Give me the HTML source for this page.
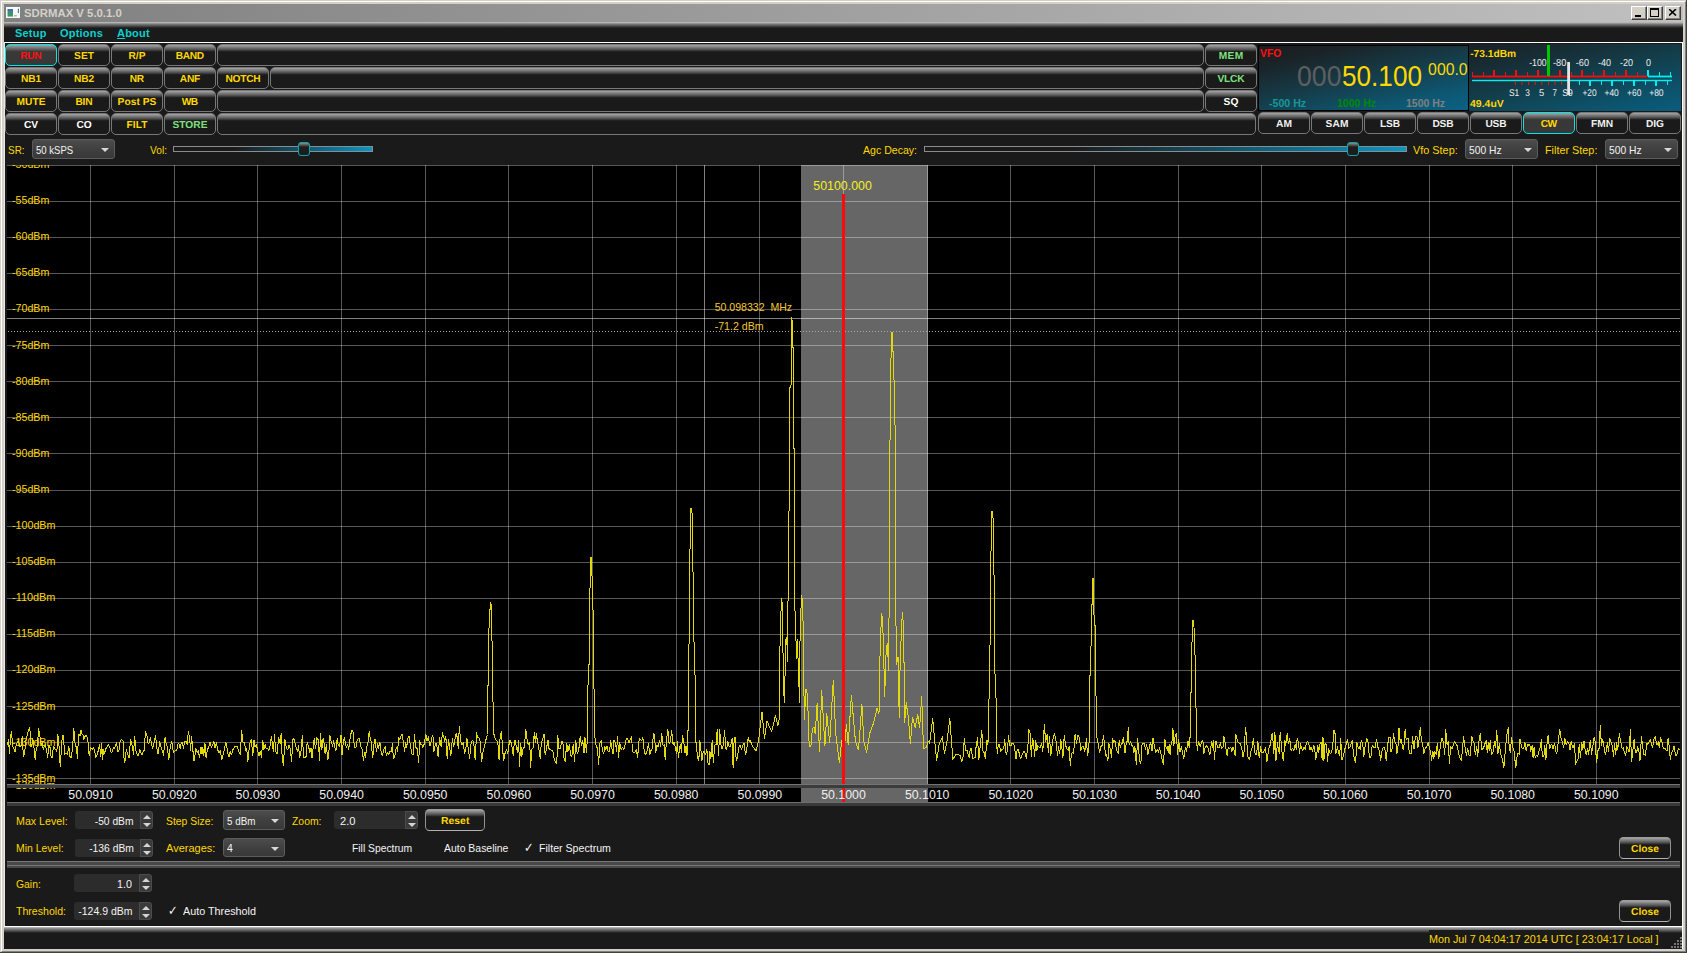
<!DOCTYPE html><html lang="en"><head><meta charset="utf-8"><title>SDRMAX V 5.0.1.0</title><style>
*{box-sizing:border-box;margin:0;padding:0}
html,body{width:1687px;height:953px;overflow:hidden;background:#1a1a1a}
body{font-family:"Liberation Sans",sans-serif;font-size:11px;position:relative;color:#fff}
.a{position:absolute}
.btn{position:absolute;height:22px;width:52px;border:1px solid #787878;border-radius:5px;
 background:linear-gradient(#a6a6a6 0px,#8a8a8a 1.5px,#5c5c5c 4px,#3a3a3a 5.5px,#1a1a1a 6.8px,#1a1a1a 100%);
 color:#ffd800;font-weight:bold;font-size:10.2px;text-rendering:geometricPrecision;text-align:center;line-height:24px;white-space:nowrap}
.btn.on{border-color:#00e6e6;background:linear-gradient(#a6a6a6 0px,#8c8c8c 1.5px,#646464 4px,#4a4a4a 5.5px,#383838 6.8px,#383838 100%)}
.btn.lt{border-color:#9c9c9c #929292 #b2b2b2;border-radius:4.5px}
.combo{position:absolute;height:20px;border:1px solid #5c5c5c;border-radius:3px;background:linear-gradient(#4c4c4c,#404040 50%,#383838)}
.combo i{position:absolute;right:5px;top:8px;width:0;height:0;border-left:4px solid transparent;border-right:4px solid transparent;border-top:4px solid #d8d8d8}
.spin{position:absolute;height:18px;background:#2c2c2c;border-radius:3px}
.spin b{position:absolute;right:0;top:0;width:13px;height:18px;background:#3a3a3a;border:1px solid #4c4c4c;border-radius:0 3px 3px 0}
.spin b:before{content:"";position:absolute;left:1.5px;top:3px;border-left:4px solid transparent;border-right:4px solid transparent;border-bottom:4px solid #d4d4d4}
.spin b:after{content:"";position:absolute;left:1.5px;top:10.5px;border-left:4px solid transparent;border-right:4px solid transparent;border-top:4px solid #d4d4d4}
.groove{position:absolute;height:6px;border:1px solid #8c8c8c;background:linear-gradient(90deg,#1a1a1a 0%,#1a1a1a 30%,#0a6a8a 75%,#0498c8 100%)}
.handle{position:absolute;width:12px;height:14px;border:1px solid #12a4ac;border-radius:3px;background:linear-gradient(#8c8c8c 0,#3a3a3a 3px,#1e1e1e 4px,#1c1c1c)}
</style></head><body>
<div class="a" style="left:0;top:0;width:1687px;height:953px;background:#d4d0c8"></div>
<div class="a" style="left:1px;top:1px;width:1685px;height:951px;border:1px solid #fff;border-right-color:#808080;border-bottom-color:#808080"></div>
<div class="a" style="left:0;top:0;width:1687px;height:953px;border-right:1px solid #404040;border-bottom:1px solid #404040"></div>
<div class="a" style="left:4px;top:4px;width:1679px;height:18px;background:linear-gradient(90deg,#808080,#c0c0c0)"></div>
<div class="a" style="top:6.69px;font-size:11px;line-height:13px;color:#d4d0c8;white-space:nowrap;font-weight:bold;left:24.20px;transform-origin:0 0;transform:scaleX(1.0321);">SDRMAX V 5.0.1.0</div>
<svg class="a" style="left:6px;top:7px" width="15" height="11" viewBox="0 0 15 11"><defs><linearGradient id="ig" x1="0" y1="0" x2="0" y2="1"><stop offset="0" stop-color="#3c66b4"/><stop offset="0.35" stop-color="#3c8a8a"/><stop offset="1" stop-color="#3ca04c"/></linearGradient></defs><rect x="0" y="0" width="14" height="11" fill="#fafafa"/><rect x="1.5" y="2" width="5.5" height="7.6" fill="url(#ig)"/><rect x="8" y="8" width="3" height="1.5" fill="#b8b8b8"/><rect x="11.8" y="1.8" width="1.2" height="4.2" fill="url(#ig)"/></svg>
<div class="a" style="left:1631px;top:6px;width:16px;height:14px;background:#d4d0c8;border:1px solid #fff;border-right-color:#404040;border-bottom-color:#404040;box-shadow:inset -1px -1px 0 #808080"></div><div class="a" style="left:1635px;top:15px;width:6px;height:2px;background:#000"></div>
<div class="a" style="left:1647px;top:6px;width:16px;height:14px;background:#d4d0c8;border:1px solid #fff;border-right-color:#404040;border-bottom-color:#404040;box-shadow:inset -1px -1px 0 #808080"></div><div class="a" style="left:1650px;top:8px;width:9px;height:9px;border:1px solid #000;border-top-width:2px"></div>
<div class="a" style="left:1665px;top:6px;width:16px;height:14px;background:#d4d0c8;border:1px solid #fff;border-right-color:#404040;border-bottom-color:#404040;box-shadow:inset -1px -1px 0 #808080"></div><svg class="a" style="left:1669px;top:9px" width="8" height="7" viewBox="0 0 8 7"><path d="M0 0L7 6.5M7 0L0 6.5" stroke="#000" stroke-width="1.6"/></svg>
<div class="a" style="left:4px;top:22px;width:1679px;height:927px;background:#1a1a1a"></div>
<div class="a" style="left:4px;top:22px;width:1679px;height:6px;background:linear-gradient(#c8c8c8,#7c7c7c 35%,#1a1a1a)"></div>
<div class="a" style="left:15px;top:26px;font-size:11px;font-weight:bold;color:#0cd0d0;line-height:14px;letter-spacing:0.2px">Setup</div>
<div class="a" style="left:60px;top:26px;font-size:11px;font-weight:bold;color:#0cd0d0;line-height:14px;letter-spacing:0.2px">Options</div>
<div class="a" style="left:117px;top:26px;font-size:11px;font-weight:bold;color:#0cd0d0;line-height:14px;letter-spacing:0.2px"><u>A</u>bout</div>
<div class="a" style="left:4px;top:42px;width:1679px;height:1px;background:#fff"></div>
<div class="a" style="left:4px;top:42px;width:1px;height:885px;background:#e8e8e8"></div>
<div class="a" style="left:1682px;top:42px;width:1px;height:907px;background:#fff"></div>
<div class="btn on" style="left:5px;top:44px;width:52px;color:#ff1010;letter-spacing:-0.37px;text-indent:-0.37px;">RUN</div>
<div class="btn " style="left:58px;top:44px;width:52px;letter-spacing:0.05px;text-indent:0.05px;">SET</div>
<div class="btn " style="left:111px;top:44px;width:52px;letter-spacing:-0.00px;text-indent:-0.00px;">R/P</div>
<div class="btn " style="left:164px;top:44px;width:52px;letter-spacing:-0.37px;text-indent:-0.37px;">BAND</div>
<div class="btn " style="left:5px;top:67px;width:52px;letter-spacing:-0.14px;text-indent:-0.14px;">NB1</div>
<div class="btn " style="left:58px;top:67px;width:52px;letter-spacing:-0.14px;text-indent:-0.14px;">NB2</div>
<div class="btn " style="left:111px;top:67px;width:52px;letter-spacing:-0.37px;text-indent:-0.37px;">NR</div>
<div class="btn " style="left:164px;top:67px;width:52px;letter-spacing:-0.32px;text-indent:-0.32px;">ANF</div>
<div class="btn " style="left:5px;top:90px;width:52px;letter-spacing:0.03px;text-indent:0.03px;">MUTE</div>
<div class="btn " style="left:58px;top:90px;width:52px;letter-spacing:-0.19px;text-indent:-0.19px;">BIN</div>
<div class="btn " style="left:111px;top:90px;width:52px;letter-spacing:0.06px;text-indent:0.06px;">Post PS</div>
<div class="btn " style="left:164px;top:90px;width:52px;letter-spacing:-0.50px;text-indent:-0.50px;">WB</div>
<div class="btn " style="left:5px;top:113px;width:52px;color:#ffffff;letter-spacing:-0.09px;text-indent:-0.09px;">CV</div>
<div class="btn " style="left:58px;top:113px;width:52px;color:#ffffff;letter-spacing:-0.15px;text-indent:-0.15px;">CO</div>
<div class="btn " style="left:111px;top:113px;width:52px;letter-spacing:0.06px;text-indent:0.06px;">FILT</div>
<div class="btn " style="left:164px;top:113px;width:52px;color:#7ee07e;letter-spacing:0.01px;text-indent:0.01px;">STORE</div>
<div class="btn " style="left:217px;top:67px;width:52px;letter-spacing:-0.25px;text-indent:-0.25px;">NOTCH</div>
<div class="btn " style="left:217px;top:44px;width:987px;"></div>
<div class="btn " style="left:270px;top:67px;width:934px;"></div>
<div class="btn " style="left:217px;top:90px;width:987px;"></div>
<div class="btn " style="left:217px;top:113px;width:1039px;"></div>
<div class="btn " style="left:1205px;top:44px;width:52px;color:#7ee07e;letter-spacing:0.40px;text-indent:0.40px;">MEM</div>
<div class="btn " style="left:1205px;top:67px;width:52px;color:#7ee07e;letter-spacing:-0.19px;text-indent:-0.19px;">VLCK</div>
<div class="btn " style="left:1205px;top:90px;width:52px;color:#fff;letter-spacing:0.13px;text-indent:0.13px;">SQ</div>
<div class="btn " style="left:1258px;top:112px;width:52px;color:#f0f0f0;letter-spacing:0.07px;text-indent:0.07px;">AM</div>
<div class="btn " style="left:1311px;top:112px;width:52px;color:#f0f0f0;letter-spacing:0.11px;text-indent:0.11px;">SAM</div>
<div class="btn " style="left:1364px;top:112px;width:52px;color:#f0f0f0;letter-spacing:-0.13px;text-indent:-0.13px;">LSB</div>
<div class="btn " style="left:1417px;top:112px;width:52px;color:#f0f0f0;letter-spacing:-0.18px;text-indent:-0.18px;">DSB</div>
<div class="btn " style="left:1470px;top:112px;width:52px;color:#f0f0f0;letter-spacing:-0.18px;text-indent:-0.18px;">USB</div>
<div class="btn on" style="left:1523px;top:112px;width:52px;letter-spacing:-0.50px;text-indent:-0.50px;">CW</div>
<div class="btn " style="left:1576px;top:112px;width:52px;color:#f0f0f0;letter-spacing:-0.03px;text-indent:-0.03px;">FMN</div>
<div class="btn " style="left:1629px;top:112px;width:52px;color:#f0f0f0;letter-spacing:-0.04px;text-indent:-0.04px;">DIG</div>
<div class="a" style="left:1258px;top:45px;width:211px;height:66px;border:1px solid #000;background:linear-gradient(167deg,#1b1c1e 0%,#1a2327 18%,#153e4c 52%,#0d5874 82%,#0b6184 100%)"></div>
<div class="a" style="top:46.69px;font-size:11px;line-height:13px;color:#ff1010;white-space:nowrap;font-weight:bold;left:1260.00px;transform-origin:0 0;transform:scaleX(0.9375);">VFO</div>
<div class="a" style="top:59.45px;font-size:29px;line-height:35px;color:#5e5e5e;white-space:nowrap;left:1297.00px;transform-origin:0 0;transform:scaleX(0.9197);">000</div>
<div class="a" style="top:59.45px;font-size:29px;line-height:35px;color:#ffd800;white-space:nowrap;left:1342.40px;transform-origin:0 0;transform:scaleX(0.9019);">50.100</div>
<div class="a" style="top:59.83px;font-size:15.8px;line-height:19px;color:#ffd800;white-space:nowrap;left:1428.10px;transform-origin:0 0;">000.0</div>
<div class="a" style="top:97.09px;font-size:10.7px;line-height:13px;color:#1a9898;white-space:nowrap;font-weight:bold;left:1269.30px;transform-origin:0 0;transform:scaleX(0.9929);">-500 Hz</div>
<div class="a" style="top:97.09px;font-size:10.7px;line-height:13px;color:#008a00;white-space:nowrap;font-weight:bold;left:1336.50px;transform-origin:0 0;transform:scaleX(0.9811);">1000 Hz</div>
<div class="a" style="top:97.09px;font-size:10.7px;line-height:13px;color:#808080;white-space:nowrap;font-weight:bold;left:1405.60px;transform-origin:0 0;transform:scaleX(0.9811);">1500 Hz</div>
<div class="a" style="left:1469px;top:44px;width:212px;height:67px;background:linear-gradient(167deg,#1a2024 0%,#182c34 22%,#12404e 52%,#0c546e 82%,#0a5c7c 100%)"></div>
<svg class="a" style="left:1469px;top:44px" width="212" height="67" viewBox="1469 44 212 67" font-family="Liberation Sans, sans-serif"><rect x="1472" y="75.6" width="176" height="1.8" fill="#ff0a0a"/><rect x="1648" y="75.6" width="24" height="1.8" fill="#00f0f0"/><rect x="1472" y="72" width="1" height="4" fill="#ff0a0a"/><rect x="1483" y="72" width="1" height="4" fill="#ff0a0a"/><rect x="1493" y="70" width="2" height="6" fill="#ff0a0a"/><rect x="1505" y="72" width="1" height="4" fill="#ff0a0a"/><rect x="1515" y="70" width="2" height="6" fill="#ff0a0a"/><rect x="1527" y="72" width="1" height="4" fill="#ff0a0a"/><rect x="1537" y="70" width="2" height="6" fill="#ff0a0a"/><rect x="1549" y="72" width="1" height="4" fill="#ff0a0a"/><rect x="1559" y="70" width="2" height="6" fill="#ff0a0a"/><rect x="1571" y="72" width="1" height="4" fill="#ff0a0a"/><rect x="1581" y="70" width="2" height="6" fill="#ff0a0a"/><rect x="1593" y="72" width="1" height="4" fill="#ff0a0a"/><rect x="1603" y="70" width="2" height="6" fill="#ff0a0a"/><rect x="1615" y="72" width="1" height="4" fill="#ff0a0a"/><rect x="1625" y="70" width="2" height="6" fill="#ff0a0a"/><rect x="1637" y="72" width="1" height="4" fill="#ff0a0a"/><rect x="1647" y="70" width="2" height="6" fill="#00f0f0"/><rect x="1659" y="72" width="1" height="4" fill="#00f0f0"/><rect x="1670" y="72" width="1" height="4" fill="#00f0f0"/><rect x="1472" y="79.8" width="200" height="1.4" fill="#00f0f0"/><rect x="1514.8" y="81" width="1" height="4" fill="#ff0a0a"/><rect x="1521.4" y="81" width="1" height="4" fill="#ff0a0a"/><rect x="1528.1" y="81" width="1" height="4" fill="#ff0a0a"/><rect x="1534.7" y="81" width="1" height="4" fill="#ff0a0a"/><rect x="1541.3" y="81" width="1" height="4" fill="#ff0a0a"/><rect x="1548.0" y="81" width="1" height="4" fill="#ff0a0a"/><rect x="1554.6" y="81" width="1" height="4" fill="#ff0a0a"/><rect x="1561.2" y="81" width="1" height="4" fill="#ff0a0a"/><rect x="1579" y="81" width="1" height="4" fill="#00f0f0"/><rect x="1601" y="81" width="1" height="4" fill="#00f0f0"/><rect x="1623" y="81" width="1" height="4" fill="#00f0f0"/><rect x="1645" y="81" width="1" height="4" fill="#00f0f0"/><rect x="1667" y="81" width="1" height="4" fill="#00f0f0"/><rect x="1589" y="81" width="2" height="5" fill="#00f0f0"/><rect x="1611" y="81" width="2" height="5" fill="#00f0f0"/><rect x="1633" y="81" width="2" height="5" fill="#00f0f0"/><rect x="1655" y="81" width="2" height="5" fill="#00f0f0"/><text x="1529.2" y="66" font-size="10.1" fill="#ececec" text-rendering="geometricPrecision" textLength="17.4" lengthAdjust="spacingAndGlyphs">-100</text><text x="1552.9" y="66" font-size="10.1" fill="#ececec" text-rendering="geometricPrecision" textLength="13.4" lengthAdjust="spacingAndGlyphs">-80</text><text x="1575.8" y="66" font-size="10.1" fill="#ececec" text-rendering="geometricPrecision" textLength="13.2" lengthAdjust="spacingAndGlyphs">-60</text><text x="1598.0" y="66" font-size="10.1" fill="#ececec" text-rendering="geometricPrecision" textLength="13" lengthAdjust="spacingAndGlyphs">-40</text><text x="1620.0" y="66" font-size="10.1" fill="#ececec" text-rendering="geometricPrecision" textLength="13" lengthAdjust="spacingAndGlyphs">-20</text><text x="1645.9" y="66" font-size="10.1" fill="#ececec" text-rendering="geometricPrecision" textLength="5" lengthAdjust="spacingAndGlyphs">0</text><text x="1509.0" y="96" font-size="9.7" fill="#ececec" text-rendering="geometricPrecision" textLength="10.3" lengthAdjust="spacingAndGlyphs">S1</text><text x="1525.2" y="96" font-size="9.7" fill="#ececec" text-rendering="geometricPrecision" textLength="4.6" lengthAdjust="spacingAndGlyphs">3</text><text x="1539.0" y="96" font-size="9.7" fill="#ececec" text-rendering="geometricPrecision" textLength="5.2" lengthAdjust="spacingAndGlyphs">5</text><text x="1552.4" y="96" font-size="9.7" fill="#ececec" text-rendering="geometricPrecision" textLength="4.4" lengthAdjust="spacingAndGlyphs">7</text><text x="1562.3" y="96" font-size="9.7" fill="#ececec" text-rendering="geometricPrecision" textLength="10.5" lengthAdjust="spacingAndGlyphs">S9</text><text x="1582.5" y="96" font-size="9.7" fill="#ececec" text-rendering="geometricPrecision" textLength="14.1" lengthAdjust="spacingAndGlyphs">+20</text><text x="1604.5" y="96" font-size="9.7" fill="#ececec" text-rendering="geometricPrecision" textLength="14.2" lengthAdjust="spacingAndGlyphs">+40</text><text x="1627.1" y="96" font-size="9.7" fill="#ececec" text-rendering="geometricPrecision" textLength="14.2" lengthAdjust="spacingAndGlyphs">+60</text><text x="1649.2" y="96" font-size="9.7" fill="#ececec" text-rendering="geometricPrecision" textLength="14.4" lengthAdjust="spacingAndGlyphs">+80</text><rect x="1547" y="45" width="3" height="31" fill="#00c800"/><rect x="1567.2" y="62" width="2.8" height="33" fill="#e4e4e4"/></svg>
<div class="a" style="top:49.47px;font-size:10.2px;line-height:12px;color:#ffd800;white-space:nowrap;font-weight:bold;text-rendering:geometricPrecision;left:1470.20px;transform-origin:0 0;">-73.1dBm</div>
<div class="a" style="top:99.47px;font-size:10.2px;line-height:12px;color:#ffd800;white-space:nowrap;font-weight:bold;text-rendering:geometricPrecision;left:1470.20px;transform-origin:0 0;transform:scaleX(1.0278);">49.4uV</div>
<div class="a" style="top:142.62px;font-size:11.5px;line-height:14px;color:#ffd800;white-space:nowrap;left:7.70px;transform-origin:0 0;transform:scaleX(0.8659);">SR:</div>
<div class="combo" style="left:32px;top:139px;width:83px"><i></i></div>
<div class="a" style="top:142.62px;font-size:11.5px;line-height:14px;color:#f4f4f4;white-space:nowrap;left:36.20px;transform-origin:0 0;transform:scaleX(0.8291);">50 kSPS</div>
<div class="a" style="top:142.62px;font-size:11.5px;line-height:14px;color:#ffd800;white-space:nowrap;left:149.60px;transform-origin:0 0;transform:scaleX(0.8862);">Vol:</div>
<div class="groove" style="left:173px;top:146px;width:200px"></div>
<div class="handle" style="left:298px;top:142px"></div>
<div class="a" style="top:142.62px;font-size:11.5px;line-height:14px;color:#ffd800;white-space:nowrap;left:863.00px;transform-origin:0 0;transform:scaleX(0.9183);">Agc Decay:</div>
<div class="groove" style="left:924px;top:146px;width:483px"></div>
<div class="handle" style="left:1347px;top:142px"></div>
<div class="a" style="top:142.62px;font-size:11.5px;line-height:14px;color:#ffd800;white-space:nowrap;left:1412.80px;transform-origin:0 0;transform:scaleX(0.9449);">Vfo Step:</div>
<div class="combo" style="left:1465px;top:139px;width:73px"><i></i></div>
<div class="a" style="top:142.62px;font-size:11.5px;line-height:14px;color:#f4f4f4;white-space:nowrap;left:1468.90px;transform-origin:0 0;transform:scaleX(0.8974);">500 Hz</div>
<div class="a" style="top:142.62px;font-size:11.5px;line-height:14px;color:#ffd800;white-space:nowrap;left:1544.60px;transform-origin:0 0;transform:scaleX(0.9424);">Filter Step:</div>
<div class="combo" style="left:1605px;top:139px;width:73px"><i></i></div>
<div class="a" style="top:142.62px;font-size:11.5px;line-height:14px;color:#f4f4f4;white-space:nowrap;left:1608.90px;transform-origin:0 0;transform:scaleX(0.8974);">500 Hz</div>
<svg class="a" style="left:0;top:165px" width="1687" height="641" viewBox="0 165 1687 641" font-family="Liberation Sans, sans-serif"><defs><clipPath id="pc"><rect x="7" y="165" width="1673" height="624.3"/></clipPath><clipPath id="pb"><rect x="801" y="165" width="127" height="620"/></clipPath></defs><rect x="7" y="165" width="1673" height="637" fill="#000"/><rect x="801" y="165" width="127" height="637" fill="#666"/><path d="M90.5 165V784 M174.5 165V784 M257.5 165V784 M341.5 165V784 M425.5 165V784 M508.5 165V784 M592.5 165V784 M676.5 165V784 M759.5 165V784 M843.5 165V784 M927.5 165V784 M1010.5 165V784 M1094.5 165V784 M1178.5 165V784 M1261.5 165V784 M1345.5 165V784 M1429.5 165V784 M1512.5 165V784 M1596.5 165V784 M7 165.5H1680 M7 201.5H1680 M7 237.5H1680 M7 273.5H1680 M7 309.5H1680 M7 345.5H1680 M7 381.5H1680 M7 417.5H1680 M7 453.5H1680 M7 490.5H1680 M7 526.5H1680 M7 562.5H1680 M7 598.5H1680 M7 634.5H1680 M7 670.5H1680 M7 706.5H1680 M7 742.5H1680 M7 778.5H1680" stroke="#fff" stroke-opacity="0.34" stroke-width="1" fill="none"/><path d="M704.5 165V784M7 318.5H1680" stroke="#fff" stroke-opacity="0.5" stroke-width="1" fill="none"/><path d="M8 331.5H1680" stroke="#a8a8a8" stroke-width="1" stroke-dasharray="1 2" fill="none"/><g clip-path="url(#pc)" font-size="11" fill="#ffd800"><text x="12" y="168" textLength="37.3" lengthAdjust="spacingAndGlyphs">-50dBm</text><text x="12" y="204" textLength="37.3" lengthAdjust="spacingAndGlyphs">-55dBm</text><text x="12" y="240" textLength="37.3" lengthAdjust="spacingAndGlyphs">-60dBm</text><text x="12" y="276" textLength="37.3" lengthAdjust="spacingAndGlyphs">-65dBm</text><text x="12" y="312" textLength="37.3" lengthAdjust="spacingAndGlyphs">-70dBm</text><text x="12" y="349" textLength="37.3" lengthAdjust="spacingAndGlyphs">-75dBm</text><text x="12" y="385" textLength="37.3" lengthAdjust="spacingAndGlyphs">-80dBm</text><text x="12" y="421" textLength="37.3" lengthAdjust="spacingAndGlyphs">-85dBm</text><text x="12" y="457" textLength="37.3" lengthAdjust="spacingAndGlyphs">-90dBm</text><text x="12" y="493" textLength="37.3" lengthAdjust="spacingAndGlyphs">-95dBm</text><text x="12" y="529" textLength="43.4" lengthAdjust="spacingAndGlyphs">-100dBm</text><text x="12" y="565" textLength="43.4" lengthAdjust="spacingAndGlyphs">-105dBm</text><text x="12" y="601" textLength="43.4" lengthAdjust="spacingAndGlyphs">-110dBm</text><text x="12" y="637" textLength="43.4" lengthAdjust="spacingAndGlyphs">-115dBm</text><text x="12" y="673" textLength="43.4" lengthAdjust="spacingAndGlyphs">-120dBm</text><text x="12" y="710" textLength="43.4" lengthAdjust="spacingAndGlyphs">-125dBm</text><text x="12" y="746" textLength="43.4" lengthAdjust="spacingAndGlyphs">-130dBm</text><text x="12" y="782" textLength="43.4" lengthAdjust="spacingAndGlyphs">-135dBm</text><text x="12" y="789" textLength="43.4" lengthAdjust="spacingAndGlyphs">-136dBm</text></g><polyline points="7.5,744.9 8.4,739.4 9.6,753.4 10.5,735.8 11.5,731.8 12.7,746.3 13.7,748.7 15.1,751.6 16.2,745.1 17.2,742.7 18.5,739.9 19.8,746.6 21.3,745.8 22.2,736.1 23.4,756.3 24.7,752.7 25.9,740.1 27.4,734.8 28.8,729.3 29.8,727.0 30.8,746.4 31.7,746.9 32.7,738.0 34.1,749.1 35.2,760.0 36.2,748.9 37.4,746.6 38.5,728.9 39.7,734.5 41.2,745.6 42.3,742.2 43.2,749.5 44.3,746.2 45.2,744.7 46.5,749.4 47.6,757.8 48.8,745.4 49.9,746.3 50.8,755.9 52.0,757.7 53.4,746.5 54.4,747.4 55.5,749.7 56.9,751.3 57.9,734.8 59.0,745.5 60.2,766.5 61.3,750.8 62.3,735.1 63.4,735.9 64.7,754.4 65.9,753.1 67.3,754.4 68.9,746.2 69.8,756.5 71.2,757.8 72.5,748.3 73.8,728.8 75.2,745.2 76.3,746.8 77.4,758.3 78.6,734.2 80.1,735.4 81.0,729.9 81.9,734.0 83.0,735.3 83.9,739.5 85.3,735.8 86.8,735.5 88.0,741.5 89.2,755.9 90.7,747.6 92.2,749.5 93.1,747.6 94.5,750.3 95.8,757.7 96.8,756.0 98.3,750.4 99.5,745.0 100.9,756.2 101.7,743.9 102.6,759.9 103.6,749.1 104.6,753.3 106.0,748.5 107.3,746.5 108.6,744.7 109.9,747.6 110.8,751.9 112.0,752.4 113.3,747.8 114.1,749.1 115.5,745.7 116.6,742.7 117.8,751.8 118.8,751.1 120.2,741.1 121.7,739.5 123.0,741.2 124.0,758.4 124.9,762.4 126.3,749.7 127.4,753.5 129.0,758.3 130.5,739.8 131.7,743.1 132.5,747.2 133.4,754.2 134.7,736.4 136.0,750.8 137.6,755.3 138.4,755.7 139.8,749.2 141.0,752.7 142.3,755.0 143.3,750.7 144.2,750.6 145.5,731.2 146.9,735.2 147.8,742.8 148.8,743.6 150.3,737.4 151.6,744.4 152.6,748.5 153.6,744.7 154.7,739.2 155.7,735.8 156.6,747.4 158.1,753.8 159.7,741.2 161.2,748.1 162.4,750.4 163.6,755.2 165.1,737.2 166.3,744.9 167.3,746.3 168.8,759.6 170.2,747.7 171.8,741.2 172.8,749.5 173.9,752.4 175.1,750.8 176.6,751.0 178.1,743.2 179.2,744.0 180.1,748.8 181.2,743.4 182.2,742.1 183.4,748.1 184.9,741.5 186.4,741.9 187.3,744.3 188.3,731.8 189.5,736.7 190.6,750.8 191.5,736.8 192.5,744.9 193.7,760.2 194.5,760.3 195.7,748.7 197.2,752.8 198.2,750.5 199.6,757.6 201.0,746.7 202.0,754.1 202.9,747.8 203.8,755.3 205.0,743.4 206.1,758.0 207.3,749.7 208.7,747.3 210.0,742.5 211.5,747.1 212.6,744.9 214.0,741.6 215.1,748.0 216.4,742.9 217.4,748.7 218.9,753.0 220.5,750.4 221.6,760.0 223.1,754.9 224.6,747.9 225.8,742.5 226.6,745.5 227.5,751.9 229.0,757.1 230.1,751.3 231.6,754.8 232.9,749.7 234.4,747.4 235.5,746.1 236.6,746.2 237.4,746.8 238.9,752.0 240.4,754.2 241.6,730.5 243.0,742.0 244.3,742.4 245.7,750.1 246.7,748.7 247.8,761.9 248.8,751.6 250.2,742.2 251.4,739.4 252.8,756.0 254.0,740.1 255.0,746.5 256.3,744.2 257.5,749.6 259.0,755.6 260.5,751.1 261.4,757.2 262.9,740.5 263.9,749.7 265.2,743.9 266.2,748.8 267.5,748.1 268.8,750.5 270.2,745.4 271.3,736.8 272.3,742.4 273.4,752.0 274.5,734.9 275.6,749.9 276.4,753.9 277.5,753.8 278.4,737.4 279.3,739.6 280.3,743.9 281.2,732.9 282.2,758.1 283.4,765.5 284.9,739.5 286.3,747.7 287.7,749.9 288.9,745.2 290.3,748.8 291.6,761.5 292.9,739.3 294.0,738.8 295.2,744.1 296.4,748.4 297.6,751.8 298.5,745.5 299.7,757.8 301.1,750.1 302.3,735.2 303.7,757.8 304.7,757.6 306.2,756.3 307.1,742.4 308.6,746.2 309.8,752.7 311.0,748.2 312.0,758.2 312.9,749.8 314.2,738.9 315.5,748.9 316.8,737.8 318.3,739.9 319.5,760.7 320.5,733.7 321.8,749.4 323.1,738.6 324.0,743.0 325.1,753.4 326.4,744.0 327.6,759.4 328.5,758.9 329.9,735.7 331.2,742.0 332.7,746.4 333.6,740.0 334.4,746.5 336.0,750.5 337.2,738.5 338.2,744.8 339.6,746.2 341.0,734.8 342.0,755.2 343.4,741.5 344.4,737.6 345.6,744.5 346.6,747.2 347.7,744.7 348.7,749.9 350.2,737.6 351.7,730.1 353.2,732.4 354.3,747.1 355.8,747.8 357.3,739.5 358.6,738.2 359.5,738.8 360.9,747.0 362.4,749.4 363.3,760.9 364.6,752.6 365.5,757.5 366.6,746.7 367.7,744.4 369.2,731.2 370.1,737.3 371.2,741.7 372.6,757.4 373.5,752.7 374.3,739.4 375.3,739.1 376.3,751.4 377.7,743.9 378.6,748.2 379.9,742.2 381.3,753.3 382.4,755.7 383.8,749.4 385.2,746.8 386.3,755.3 387.7,752.7 388.9,754.5 389.9,751.4 391.4,751.1 392.4,743.9 393.4,758.8 395.0,755.3 396.4,747.2 397.7,751.1 398.5,737.6 399.7,739.9 401.0,736.2 402.2,734.1 403.2,741.1 404.5,751.2 405.7,742.9 406.8,747.2 407.8,738.7 409.0,735.9 410.3,744.4 411.8,754.0 413.2,754.7 414.5,734.9 415.8,747.4 417.3,748.9 418.7,762.8 419.6,740.7 420.7,744.7 421.7,744.2 422.7,747.2 423.6,746.9 424.8,739.9 425.9,734.5 427.1,741.0 428.5,736.6 429.6,745.2 430.5,745.0 431.6,738.4 432.9,735.0 433.8,751.9 434.7,746.5 436.2,743.1 437.2,747.4 438.1,756.9 439.6,737.0 441.1,746.6 442.4,732.9 443.9,737.5 444.8,741.4 445.8,736.0 447.2,758.4 448.5,739.5 449.6,747.0 450.9,755.7 452.4,738.2 453.6,747.0 454.9,739.8 456.1,733.5 457.2,737.1 458.3,748.9 459.3,726.8 460.7,741.0 462.0,744.4 463.5,742.6 464.3,753.1 465.6,751.0 466.9,738.3 468.2,748.0 469.6,758.6 471.1,742.9 472.5,740.3 473.7,742.5 475.2,760.0 476.6,732.7 477.4,737.2 479.0,737.8 480.3,741.7 481.6,762.0 483.1,750.9 484.1,747.3 485.5,742.8 486.4,737.0 487.5,734.5 487.8,686.0 488.8,683.9 489.0,627.7 489.8,625.5 490.1,602.5 490.9,602.5 491.4,609.7 491.9,640.7 492.7,642.8 493.0,701.9 493.8,703.3 494.0,734.5 494.9,737.4 496.3,740.7 497.8,741.7 499.1,759.8 500.2,735.1 501.5,731.8 502.6,750.0 503.8,760.3 505.2,752.5 506.7,749.5 507.8,754.0 508.8,745.4 510.0,740.4 511.1,742.8 512.0,747.3 513.2,755.7 514.4,741.0 515.4,740.7 516.5,748.0 517.6,752.1 518.6,740.0 519.5,766.7 520.7,743.1 521.8,756.8 523.3,747.1 524.3,748.0 525.8,729.1 526.7,737.2 528.2,745.0 529.7,742.3 530.7,767.8 531.5,749.5 533.0,748.0 534.4,732.2 535.3,742.6 536.4,733.1 537.5,742.8 538.4,745.2 539.3,752.6 540.3,758.3 541.2,744.0 542.7,739.1 544.1,734.0 545.1,755.1 546.1,751.0 547.0,745.6 548.0,740.0 548.9,748.2 550.2,749.5 551.3,750.1 552.8,750.7 554.3,759.3 555.8,762.7 556.8,763.7 557.7,735.1 559.0,748.9 560.3,749.0 561.6,741.8 562.9,742.0 563.9,757.3 565.2,761.5 566.7,743.1 567.9,751.5 569.3,744.3 570.6,755.2 571.8,757.0 573.2,744.2 574.6,761.5 575.8,740.6 576.7,751.6 577.6,753.4 578.9,748.7 580.2,736.4 581.6,745.3 582.8,740.9 584.0,753.3 584.9,736.9 586.4,752.1 587.8,734.5 588.1,667.1 589.1,664.3 589.4,590.6 590.2,587.7 590.5,557.5 591.4,557.5 591.9,567.0 592.4,607.6 593.2,610.4 593.5,687.9 594.4,689.8 594.7,734.5 595.7,744.6 597.3,748.1 598.7,764.1 599.7,744.0 601.2,740.5 602.4,750.1 603.7,753.7 604.9,746.6 605.8,749.4 607.0,746.1 608.2,751.6 609.5,751.5 610.7,740.9 611.8,748.0 613.0,754.2 614.0,739.8 615.6,743.0 616.5,751.9 617.6,736.8 618.6,757.2 619.7,742.4 621.1,749.9 622.5,747.1 623.8,749.5 624.7,746.9 626.2,738.6 627.7,738.5 628.9,742.9 630.1,740.2 631.5,736.8 632.6,751.0 633.5,752.6 635.0,751.9 636.4,749.3 637.6,757.5 639.2,738.6 640.3,739.1 641.8,740.7 642.9,737.8 644.4,753.4 645.7,754.2 647.1,751.0 648.5,743.7 649.9,754.4 651.0,750.5 652.2,748.7 653.5,733.7 654.4,734.7 655.7,752.1 657.0,745.5 658.2,746.6 659.7,740.4 660.7,746.2 661.7,733.0 663.1,745.8 664.2,744.6 665.2,759.8 666.3,742.0 667.8,729.2 669.1,743.9 670.5,740.9 671.6,730.5 673.1,745.0 674.1,742.2 675.5,747.5 676.5,753.8 677.4,741.2 678.3,757.1 679.3,751.8 680.2,744.6 681.5,752.1 682.5,735.2 683.4,739.3 685.0,752.8 686.0,745.8 687.0,755.7 688.0,734.5 688.3,646.5 689.4,643.0 689.7,550.1 690.6,546.6 690.9,508.5 691.8,508.5 692.4,520.4 692.9,571.6 693.8,575.1 694.1,672.7 695.0,675.1 695.3,734.5 696.4,746.9 697.7,758.4 698.8,760.4 699.9,740.5 700.9,750.2 701.9,760.8 703.2,751.8 704.2,751.9 705.5,754.7 706.9,749.7 708.0,762.9 709.0,764.9 709.9,751.2 710.9,758.8 712.2,740.1 713.3,762.7 714.8,745.2 716.1,744.7 717.2,729.7 718.6,755.8 719.6,729.2 720.9,744.3 722.0,748.8 723.4,744.4 724.6,730.4 725.6,747.5 726.7,750.0 727.7,741.1 729.1,746.6 730.2,746.7 731.2,743.1 732.2,738.4 733.1,767.9 734.0,743.5 735.0,736.7 736.2,760.6 737.5,757.3 738.5,748.3 739.9,744.9 741.4,749.7 742.8,745.7 744.2,743.1 745.4,754.8 746.6,750.4 748.2,737.4 749.2,741.5 750.0,740.0 752.4,746.0 756.0,750.8 758.5,741.0 762.0,712.0 764.5,738.7 767.0,720.6 769.3,726.7 771.7,731.5 775.4,715.8 777.8,725.5 779.5,718.0 779.7,656.6 781.4,598.0 782.6,606.0 783.3,685.6 784.5,702.5 785.7,639.7 786.7,637.3 787.7,661.4 788.2,569.0 788.2,512.5 789.6,509.6 789.9,387.8 791.1,385.0 791.3,317.5 791.9,317.5 792.5,331.0 793.3,356.7 793.6,447.3 794.5,450.0 794.7,569.0 795.0,610.7 795.9,637.3 796.6,659.0 797.1,639.7 798.3,663.9 799.5,702.5 800.2,620.4 801.9,595.0 803.1,622.8 804.3,719.4 806.0,689.2 807.5,695.3 809.2,746.0 810.9,746.0 812.3,729.0 814.0,726.7 815.2,733.9 817.1,703.7 819.6,752.0 821.7,690.4 824.9,746.0 826.8,713.4 829.7,742.4 833.3,680.0 835.7,733.9 839.4,762.9 841.8,740.0 844.2,750.8 846.4,724.8 848.2,745.0 851.4,695.0 855.4,741.0 858.5,750.0 861.9,704.2 863.8,741.0 866.6,752.7 869.8,733.0 873.7,722.6 877.1,708.1 879.0,713.4 880.3,638.7 881.9,613.7 883.2,636.0 884.7,696.3 886.3,646.5 887.6,643.9 888.4,670.1 889.6,569.0 889.6,441.6 890.5,438.8 890.5,359.5 891.6,356.7 891.9,332.6 892.5,332.6 892.8,351.0 893.9,353.8 894.2,421.8 895.0,424.6 895.3,569.0 896.5,664.9 898.1,657.0 899.2,717.3 900.2,659.6 902.3,612.4 903.6,625.5 904.7,722.6 906.2,702.9 908.3,717.3 910.4,743.5 912.5,717.3 915.1,727.8 917.8,714.7 919.6,727.8 921.7,696.3 923.5,748.8 926.2,747.5 928.3,741.0 929.6,743.5 932.7,718.6 936.6,760.6 939.3,743.5 942.4,737.0 944.5,754.0 947.1,741.0 949.8,718.6 952.9,759.3 956.3,754.0 960.0,755.3 961.7,761.5 963.0,757.6 964.4,738.3 965.5,750.8 967.0,749.9 968.3,755.7 969.4,758.0 970.3,748.0 971.3,749.0 972.6,758.1 974.0,758.2 975.1,757.3 976.1,746.5 977.5,738.0 978.9,759.6 980.4,744.1 981.8,730.5 983.0,751.4 983.9,752.0 985.4,758.8 986.9,739.9 987.8,744.1 988.9,734.5 989.2,647.8 990.3,644.3 990.6,552.6 991.5,549.1 991.8,511.5 992.7,511.5 993.3,523.2 993.8,573.8 994.7,577.3 995.0,673.6 995.9,676.0 996.2,734.5 997.3,753.9 998.3,744.4 999.5,744.1 1000.5,751.3 1001.7,749.2 1002.9,749.5 1003.9,746.9 1004.7,739.9 1006.2,754.6 1007.5,749.8 1008.5,735.7 1009.8,745.3 1011.0,746.2 1012.2,743.0 1013.5,743.2 1014.5,747.3 1016.0,759.4 1017.2,749.9 1018.5,749.9 1019.9,757.0 1020.9,758.7 1021.8,755.3 1023.2,752.7 1024.3,751.1 1025.4,754.1 1026.3,758.7 1027.8,747.7 1028.8,729.4 1030.1,733.6 1031.4,756.9 1032.4,738.5 1033.6,741.8 1034.5,756.7 1035.8,740.9 1036.9,750.2 1037.8,745.4 1039.1,747.2 1040.0,748.0 1041.5,743.1 1042.8,751.3 1044.3,724.5 1045.7,741.9 1047.2,734.1 1048.3,752.9 1049.5,736.6 1050.8,755.7 1052.4,742.5 1053.5,736.1 1054.7,733.8 1056.1,741.8 1057.5,755.6 1058.4,746.8 1059.8,753.8 1060.7,739.4 1061.8,746.6 1062.9,757.8 1064.2,735.7 1065.6,745.5 1067.0,748.9 1068.2,750.5 1069.2,746.7 1070.3,765.3 1071.4,754.0 1072.5,752.4 1073.6,753.3 1075.1,734.5 1076.5,743.6 1077.7,735.9 1078.7,735.2 1079.8,741.4 1080.7,750.1 1082.2,746.9 1083.4,746.3 1084.8,751.3 1086.4,738.9 1087.5,755.9 1088.6,749.1 1089.6,734.5 1089.9,675.9 1090.9,673.4 1091.2,607.9 1092.0,605.4 1092.3,578.5 1093.1,578.5 1093.7,586.9 1094.1,623.0 1095.0,625.5 1095.2,694.4 1096.1,696.1 1096.3,734.5 1098.2,743.6 1099.6,752.9 1100.9,746.3 1102.4,745.4 1103.3,735.6 1104.4,742.6 1105.4,755.3 1106.5,754.6 1107.9,760.8 1108.9,743.2 1110.2,749.0 1111.6,757.6 1112.5,738.8 1113.8,742.8 1115.0,740.5 1116.5,749.8 1118.1,753.3 1119.2,740.8 1120.3,747.4 1121.3,744.3 1122.3,743.1 1123.5,737.2 1125.0,753.0 1125.9,745.8 1127.3,740.4 1128.3,727.2 1129.1,744.9 1130.5,741.4 1131.5,745.2 1133.0,746.5 1133.9,752.6 1134.9,746.3 1136.3,764.7 1137.6,738.6 1138.6,750.0 1139.7,760.7 1140.9,763.7 1141.8,745.1 1143.0,743.2 1144.4,743.8 1145.4,749.5 1146.7,744.9 1148.0,754.5 1149.4,746.3 1150.7,742.4 1152.0,751.1 1153.0,737.7 1154.3,745.4 1155.8,752.4 1157.3,749.7 1158.6,752.6 1159.5,747.8 1160.8,753.0 1162.0,759.2 1163.5,764.1 1164.9,739.7 1166.3,748.6 1167.4,746.9 1168.3,752.9 1169.2,744.1 1170.1,755.0 1171.0,744.6 1172.0,741.3 1172.9,728.0 1173.8,745.9 1175.0,737.3 1176.3,733.4 1177.7,754.7 1178.6,739.1 1180.1,752.2 1181.4,746.8 1182.5,753.1 1183.8,758.5 1185.3,747.6 1186.5,751.4 1188.0,741.5 1189.4,747.8 1190.2,734.5 1190.5,693.6 1191.4,691.7 1191.7,642.5 1192.5,640.7 1192.7,620.5 1193.5,620.5 1194.0,626.8 1194.5,653.9 1195.2,655.8 1195.5,707.4 1196.3,708.7 1196.5,734.5 1197.2,750.3 1198.6,741.7 1199.6,745.2 1200.6,746.1 1201.9,740.8 1202.9,740.8 1203.9,753.9 1205.2,747.1 1206.1,745.6 1207.3,746.9 1208.4,748.2 1209.4,754.9 1210.4,752.6 1211.4,741.5 1212.4,747.6 1213.5,740.3 1214.4,759.6 1215.9,740.9 1217.3,746.2 1218.2,748.0 1219.3,747.9 1220.3,742.4 1221.5,748.2 1223.0,747.6 1223.9,736.1 1224.8,741.1 1226.0,748.5 1227.2,755.8 1228.2,747.2 1229.7,748.4 1230.9,747.1 1231.9,751.8 1233.1,746.8 1234.2,750.3 1235.1,756.0 1235.9,734.3 1237.3,740.5 1238.6,742.8 1240.1,743.7 1241.6,747.7 1243.1,757.0 1244.0,752.1 1245.5,727.3 1246.5,737.2 1247.7,756.0 1249.2,759.2 1250.2,756.5 1251.3,748.6 1252.2,748.0 1253.3,738.8 1254.2,746.8 1255.2,754.0 1256.6,754.1 1257.9,741.7 1259.2,757.7 1260.7,746.4 1261.6,752.9 1263.2,752.6 1264.6,750.4 1265.5,747.7 1266.9,761.2 1267.8,755.5 1269.2,747.3 1270.4,744.8 1271.7,735.0 1272.5,733.5 1273.8,753.6 1274.9,731.9 1276.0,760.6 1277.4,742.9 1278.3,748.3 1279.2,753.3 1280.1,732.7 1281.2,742.2 1282.4,757.2 1283.5,760.4 1284.8,740.2 1285.8,745.3 1287.2,733.3 1288.4,744.0 1289.8,738.9 1291.1,751.1 1292.5,748.2 1294.0,750.4 1295.2,743.9 1296.2,749.2 1297.2,738.2 1298.6,743.5 1299.5,753.7 1300.5,743.7 1301.5,748.0 1302.8,750.2 1304.2,747.0 1305.4,749.5 1306.3,742.8 1307.5,741.3 1308.5,742.2 1309.8,749.9 1311.1,747.0 1312.5,751.5 1313.9,745.0 1314.8,750.2 1315.7,759.4 1316.7,754.9 1317.8,745.1 1318.7,752.7 1319.8,744.2 1321.0,741.8 1322.1,759.8 1323.0,737.2 1323.9,760.3 1325.1,742.8 1326.5,745.4 1327.6,761.8 1328.6,748.4 1329.5,751.5 1330.5,753.8 1331.6,752.3 1332.5,748.1 1334.0,729.8 1335.1,733.8 1336.0,753.5 1337.4,746.8 1338.6,752.5 1339.7,755.5 1340.7,738.2 1341.9,759.9 1343.4,756.4 1344.8,749.1 1345.9,746.0 1347.4,739.3 1348.8,748.7 1350.3,746.3 1351.4,743.1 1352.3,740.0 1353.4,753.2 1354.3,758.3 1355.6,762.6 1356.8,742.7 1358.3,748.4 1359.2,746.8 1360.2,749.9 1361.2,740.5 1362.7,743.1 1363.9,756.3 1365.3,745.2 1366.8,738.1 1368.2,742.6 1369.3,756.8 1370.8,757.8 1372.2,745.3 1373.6,747.6 1375.0,747.7 1376.5,739.7 1378.0,747.5 1379.4,751.0 1380.7,760.4 1382.0,750.8 1383.2,747.7 1384.7,747.1 1386.2,760.8 1387.7,744.1 1389.1,736.9 1390.1,737.3 1391.0,751.9 1392.4,748.2 1393.4,733.5 1394.6,741.2 1396.0,743.9 1396.9,753.5 1397.8,749.9 1399.0,728.2 1400.3,742.7 1401.5,739.9 1402.5,748.7 1403.7,750.0 1405.2,729.0 1406.2,740.0 1407.1,738.0 1408.2,738.1 1409.3,753.9 1410.2,753.8 1411.5,753.4 1412.5,736.2 1414.0,748.9 1415.4,736.6 1417.0,737.0 1417.9,747.3 1419.1,739.7 1420.2,727.6 1421.4,739.6 1422.8,745.1 1423.9,753.9 1424.9,749.0 1425.8,747.6 1426.8,747.0 1428.1,742.3 1429.4,747.7 1430.5,751.1 1431.6,760.3 1432.9,751.0 1433.8,759.1 1434.8,751.5 1436.1,754.5 1437.2,743.9 1438.8,758.2 1439.7,753.0 1440.6,743.1 1442.0,737.9 1443.3,742.0 1444.8,754.1 1445.7,729.3 1447.1,745.2 1448.3,741.4 1449.4,763.3 1450.7,746.3 1452.2,749.1 1453.7,743.4 1454.8,741.7 1455.9,743.5 1457.4,746.1 1458.7,754.2 1460.2,758.8 1461.2,760.5 1462.6,749.5 1463.5,736.2 1464.8,745.2 1466.3,755.3 1467.8,748.6 1468.9,755.1 1470.3,755.6 1471.8,736.4 1473.1,741.6 1474.0,743.2 1475.4,754.7 1476.8,746.8 1477.8,756.3 1478.8,741.8 1480.3,733.6 1481.8,749.2 1483.3,748.8 1484.7,744.3 1486.1,740.8 1487.3,752.7 1488.3,742.0 1489.2,750.5 1490.3,740.5 1491.5,754.4 1493.1,752.2 1494.6,741.1 1495.5,747.7 1496.8,730.1 1497.9,754.1 1499.3,743.8 1500.4,751.2 1501.3,756.4 1502.5,758.9 1503.8,768.0 1505.2,751.9 1506.7,736.1 1508.2,727.7 1509.1,746.0 1510.2,752.2 1511.7,737.7 1513.1,748.6 1514.2,751.3 1515.7,768.0 1517.0,757.4 1518.1,753.1 1519.1,754.3 1520.0,738.6 1521.2,744.6 1522.3,748.7 1523.7,748.3 1524.9,742.2 1526.2,750.9 1527.7,744.1 1528.6,745.4 1529.7,744.4 1530.7,751.1 1532.2,745.6 1533.1,758.0 1534.1,747.3 1535.2,757.7 1536.4,755.4 1537.7,756.8 1538.8,751.9 1540.4,746.2 1541.4,739.3 1542.3,755.8 1543.8,757.0 1544.8,745.0 1545.9,759.4 1546.8,745.2 1548.1,735.7 1549.5,749.0 1550.8,745.4 1551.9,744.3 1553.1,749.0 1554.5,743.4 1555.9,751.3 1556.7,753.9 1558.3,741.9 1559.7,729.0 1561.2,739.3 1562.4,742.1 1563.7,747.6 1564.9,738.0 1566.1,744.8 1567.5,741.9 1568.7,742.8 1570.1,750.1 1571.1,741.0 1572.2,745.7 1573.2,747.8 1574.5,743.6 1575.6,764.1 1576.9,761.6 1578.0,759.1 1579.2,744.6 1580.5,757.2 1581.7,742.3 1582.7,749.4 1584.1,740.9 1585.3,751.9 1586.2,754.8 1587.5,748.7 1588.6,754.8 1589.7,743.3 1590.5,740.8 1591.5,754.4 1592.8,746.3 1594.1,737.1 1595.1,741.6 1596.6,762.6 1598.0,750.3 1598.9,750.7 1600.3,725.5 1601.4,745.7 1602.8,739.8 1603.8,746.1 1605.3,754.7 1606.2,751.7 1607.3,742.1 1608.5,751.2 1609.7,738.4 1611.2,742.6 1612.4,746.7 1613.5,756.5 1614.6,743.5 1615.7,754.6 1616.7,742.7 1617.8,749.1 1619.3,733.7 1620.8,741.8 1622.0,748.4 1623.3,747.9 1624.6,752.8 1625.8,755.2 1626.8,746.2 1628.1,749.5 1629.2,752.1 1630.3,729.7 1631.6,761.9 1633.2,747.3 1634.1,739.6 1635.3,752.0 1636.7,752.6 1637.6,746.6 1638.9,750.4 1639.9,761.2 1641.5,736.8 1643.0,749.0 1643.9,754.6 1645.4,755.1 1646.8,743.2 1647.8,744.6 1649.1,741.6 1650.7,739.9 1651.5,744.9 1652.6,747.9 1653.9,739.3 1655.4,736.9 1656.4,743.5 1657.3,744.9 1658.4,741.8 1659.3,747.3 1660.5,737.6 1661.9,741.9 1663.3,748.8 1664.8,748.3 1666.0,750.3 1667.1,750.5 1668.1,738.5 1669.3,746.4 1670.3,759.4 1671.5,752.4 1672.9,750.5 1674.0,745.8 1675.3,753.5 1676.2,756.0 1677.2,753.6 1678.4,748.6 1679.6,749.7" fill="none" stroke="#e2d80a" stroke-width="1" stroke-linejoin="round" shape-rendering="crispEdges"/><rect x="842" y="194" width="3" height="608" fill="#ff0a0a"/><rect x="7" y="784" width="1673" height="4" fill="#3c3c3c"/><rect x="7" y="784" width="1673" height="1" fill="#747474"/><rect x="7" y="802" width="1673" height="4" fill="#3a3a3a"/><rect x="7" y="802" width="1673" height="1" fill="#6e6e6e"/><text x="68.3" y="798.8" font-size="12" fill="#f0f0f0" textLength="44.6" lengthAdjust="spacingAndGlyphs">50.0910</text><text x="152.0" y="798.8" font-size="12" fill="#f0f0f0" textLength="44.6" lengthAdjust="spacingAndGlyphs">50.0920</text><text x="235.6" y="798.8" font-size="12" fill="#f0f0f0" textLength="44.6" lengthAdjust="spacingAndGlyphs">50.0930</text><text x="319.3" y="798.8" font-size="12" fill="#f0f0f0" textLength="44.6" lengthAdjust="spacingAndGlyphs">50.0940</text><text x="402.9" y="798.8" font-size="12" fill="#f0f0f0" textLength="44.6" lengthAdjust="spacingAndGlyphs">50.0950</text><text x="486.6" y="798.8" font-size="12" fill="#f0f0f0" textLength="44.6" lengthAdjust="spacingAndGlyphs">50.0960</text><text x="570.2" y="798.8" font-size="12" fill="#f0f0f0" textLength="44.6" lengthAdjust="spacingAndGlyphs">50.0970</text><text x="653.9" y="798.8" font-size="12" fill="#f0f0f0" textLength="44.6" lengthAdjust="spacingAndGlyphs">50.0980</text><text x="737.6" y="798.8" font-size="12" fill="#f0f0f0" textLength="44.6" lengthAdjust="spacingAndGlyphs">50.0990</text><text x="821.2" y="798.8" font-size="12" fill="#f0f0f0" textLength="44.6" lengthAdjust="spacingAndGlyphs">50.1000</text><text x="904.9" y="798.8" font-size="12" fill="#f0f0f0" textLength="44.6" lengthAdjust="spacingAndGlyphs">50.1010</text><text x="988.5" y="798.8" font-size="12" fill="#f0f0f0" textLength="44.6" lengthAdjust="spacingAndGlyphs">50.1020</text><text x="1072.2" y="798.8" font-size="12" fill="#f0f0f0" textLength="44.6" lengthAdjust="spacingAndGlyphs">50.1030</text><text x="1155.8" y="798.8" font-size="12" fill="#f0f0f0" textLength="44.6" lengthAdjust="spacingAndGlyphs">50.1040</text><text x="1239.5" y="798.8" font-size="12" fill="#f0f0f0" textLength="44.6" lengthAdjust="spacingAndGlyphs">50.1050</text><text x="1323.1" y="798.8" font-size="12" fill="#f0f0f0" textLength="44.6" lengthAdjust="spacingAndGlyphs">50.1060</text><text x="1406.8" y="798.8" font-size="12" fill="#f0f0f0" textLength="44.6" lengthAdjust="spacingAndGlyphs">50.1070</text><text x="1490.4" y="798.8" font-size="12" fill="#f0f0f0" textLength="44.6" lengthAdjust="spacingAndGlyphs">50.1080</text><text x="1574.0" y="798.8" font-size="12" fill="#f0f0f0" textLength="44.6" lengthAdjust="spacingAndGlyphs">50.1090</text><text x="813.3" y="189.9" font-size="12" fill="#f4f020" textLength="58.5" lengthAdjust="spacingAndGlyphs">50100.000</text><text x="714.7" y="311" font-size="11" fill="#f6c832" textLength="77.4" lengthAdjust="spacingAndGlyphs">50.098332&#160; MHz</text><text x="714.7" y="330.2" font-size="11" fill="#f6c832" textLength="48.9" lengthAdjust="spacingAndGlyphs">-71.2 dBm</text></svg>
<div class="a" style="top:814.22px;font-size:11.5px;line-height:14px;color:#ffd800;white-space:nowrap;left:15.50px;transform-origin:0 0;transform:scaleX(0.9279);">Max Level:</div>
<div class="spin" style="left:75px;top:811px;width:78px"><b></b></div>
<div class="a" style="top:814.22px;font-size:11.5px;line-height:14px;color:#f4f4f4;white-space:nowrap;right:1553.60px;transform-origin:100% 0;transform:scaleX(0.8904);">-50 dBm</div>
<div class="a" style="top:814.22px;font-size:11.5px;line-height:14px;color:#ffd800;white-space:nowrap;left:165.70px;transform-origin:0 0;transform:scaleX(0.9023);">Step Size:</div>
<div class="combo" style="left:223px;top:810px;width:62px;height:20px"><i></i></div>
<div class="a" style="top:814.22px;font-size:11.5px;line-height:14px;color:#f4f4f4;white-space:nowrap;left:227.10px;transform-origin:0 0;transform:scaleX(0.8545);">5 dBm</div>
<div class="a" style="top:814.22px;font-size:11.5px;line-height:14px;color:#ffd800;white-space:nowrap;left:291.70px;transform-origin:0 0;transform:scaleX(0.9051);">Zoom:</div>
<div class="spin" style="left:334px;top:811px;width:84px"><b></b></div>
<div class="a" style="top:814.22px;font-size:11.5px;line-height:14px;color:#f4f4f4;white-space:nowrap;left:339.80px;transform-origin:0 0;transform:scaleX(0.9696);">2.0</div>
<div class="btn lt" style="left:425px;top:809px;width:60px;"></div>
<div class="a" style="top:816.47px;font-size:10.2px;line-height:12px;color:#ffd800;white-space:nowrap;font-weight:bold;text-rendering:geometricPrecision;left:441.10px;transform-origin:0 0;transform:scaleX(1.0222);">Reset</div>
<div class="a" style="top:841.02px;font-size:11.5px;line-height:14px;color:#ffd800;white-space:nowrap;left:15.50px;transform-origin:0 0;transform:scaleX(0.9082);">Min Level:</div>
<div class="spin" style="left:75px;top:839px;width:78px"><b></b></div>
<div class="a" style="top:841.02px;font-size:11.5px;line-height:14px;color:#f4f4f4;white-space:nowrap;right:1553.60px;transform-origin:100% 0;transform:scaleX(0.8965);">-136 dBm</div>
<div class="a" style="top:841.02px;font-size:11.5px;line-height:14px;color:#ffd800;white-space:nowrap;left:165.70px;transform-origin:0 0;transform:scaleX(0.9559);">Averages:</div>
<div class="combo" style="left:223px;top:838px;width:62px;height:19px"><i></i></div>
<div class="a" style="top:841.02px;font-size:11.5px;line-height:14px;color:#f4f4f4;white-space:nowrap;left:227.10px;transform-origin:0 0;transform:scaleX(0.9068);">4</div>
<div class="a" style="top:841.02px;font-size:11.5px;line-height:14px;color:#f4f4f4;white-space:nowrap;left:352.10px;transform-origin:0 0;transform:scaleX(0.8972);">Fill Spectrum</div>
<div class="a" style="top:841.02px;font-size:11.5px;line-height:14px;color:#f4f4f4;white-space:nowrap;left:443.90px;transform-origin:0 0;transform:scaleX(0.9075);">Auto Baseline</div>
<div class="a" style="top:839.80px;font-size:13px;line-height:16px;color:#f4f4f4;white-space:nowrap;left:524.00px;transform-origin:0 0;transform:scaleX(0.8821);">&#10003;</div>
<div class="a" style="top:841.02px;font-size:11.5px;line-height:14px;color:#f4f4f4;white-space:nowrap;left:539.30px;transform-origin:0 0;transform:scaleX(0.9222);">Filter Spectrum</div>
<div class="btn lt" style="left:1619px;top:837px;width:52px;"></div>
<div class="a" style="top:844.47px;font-size:10.2px;line-height:12px;color:#ffd800;white-space:nowrap;font-weight:bold;text-rendering:geometricPrecision;left:1631.00px;transform-origin:0 0;transform:scaleX(1.0044);">Close</div>
<div class="a" style="left:7px;top:861px;width:1673px;height:7px;background:#484848"></div>
<div class="a" style="left:7px;top:861px;width:1673px;height:1px;background:#787878"></div>
<div class="a" style="left:7px;top:865px;width:1673px;height:1px;background:#787878"></div>
<div class="a" style="top:876.72px;font-size:11.5px;line-height:14px;color:#ffd800;white-space:nowrap;left:15.50px;transform-origin:0 0;transform:scaleX(0.9023);">Gain:</div>
<div class="spin" style="left:74px;top:874px;width:78px"><b></b></div>
<div class="a" style="top:876.72px;font-size:11.5px;line-height:14px;color:#f4f4f4;white-space:nowrap;right:1554.60px;transform-origin:100% 0;transform:scaleX(0.9320);">1.0</div>
<div class="a" style="top:903.92px;font-size:11.5px;line-height:14px;color:#ffd800;white-space:nowrap;left:16.10px;transform-origin:0 0;transform:scaleX(0.9202);">Threshold:</div>
<div class="spin" style="left:74px;top:902px;width:78px"><b></b></div>
<div class="a" style="top:903.92px;font-size:11.5px;line-height:14px;color:#f4f4f4;white-space:nowrap;right:1554.60px;transform-origin:100% 0;transform:scaleX(0.9117);">-124.9 dBm</div>
<div class="a" style="top:902.70px;font-size:13px;line-height:16px;color:#f4f4f4;white-space:nowrap;left:168.00px;transform-origin:0 0;transform:scaleX(0.8821);">&#10003;</div>
<div class="a" style="top:903.92px;font-size:11.5px;line-height:14px;color:#f4f4f4;white-space:nowrap;left:183.40px;transform-origin:0 0;transform:scaleX(0.9372);">Auto Threshold</div>
<div class="btn lt" style="left:1619px;top:900px;width:52px;"></div>
<div class="a" style="top:907.47px;font-size:10.2px;line-height:12px;color:#ffd800;white-space:nowrap;font-weight:bold;text-rendering:geometricPrecision;left:1631.00px;transform-origin:0 0;transform:scaleX(1.0044);">Close</div>
<div class="a" style="left:4px;top:926px;width:1679px;height:1px;background:#fff"></div>
<div class="a" style="left:4px;top:927px;width:1678px;height:6px;background:linear-gradient(#c4c4c4,#8c8c8c 25%,#1a1a1a)"></div>
<div class="a" style="left:1429px;top:930px;width:230px;height:18px;background:#1a1a1a"></div>
<div class="a" style="top:931.72px;font-size:11.5px;line-height:14px;color:#ffd800;white-space:nowrap;left:1428.60px;transform-origin:0 0;transform:scaleX(0.9377);">Mon Jul 7 04:04:17 2014 UTC [ 23:04:17 Local ]</div>
<svg class="a" style="left:1671px;top:937px" width="12" height="12"><rect x="0" y="9" width="2" height="2" fill="#747474"/><rect x="3" y="6" width="2" height="2" fill="#747474"/><rect x="3" y="9" width="2" height="2" fill="#747474"/><rect x="6" y="3" width="2" height="2" fill="#747474"/><rect x="6" y="6" width="2" height="2" fill="#747474"/><rect x="6" y="9" width="2" height="2" fill="#747474"/><rect x="9" y="0" width="2" height="2" fill="#747474"/><rect x="9" y="3" width="2" height="2" fill="#747474"/><rect x="9" y="6" width="2" height="2" fill="#747474"/><rect x="9" y="9" width="2" height="2" fill="#747474"/></svg>
</body></html>
